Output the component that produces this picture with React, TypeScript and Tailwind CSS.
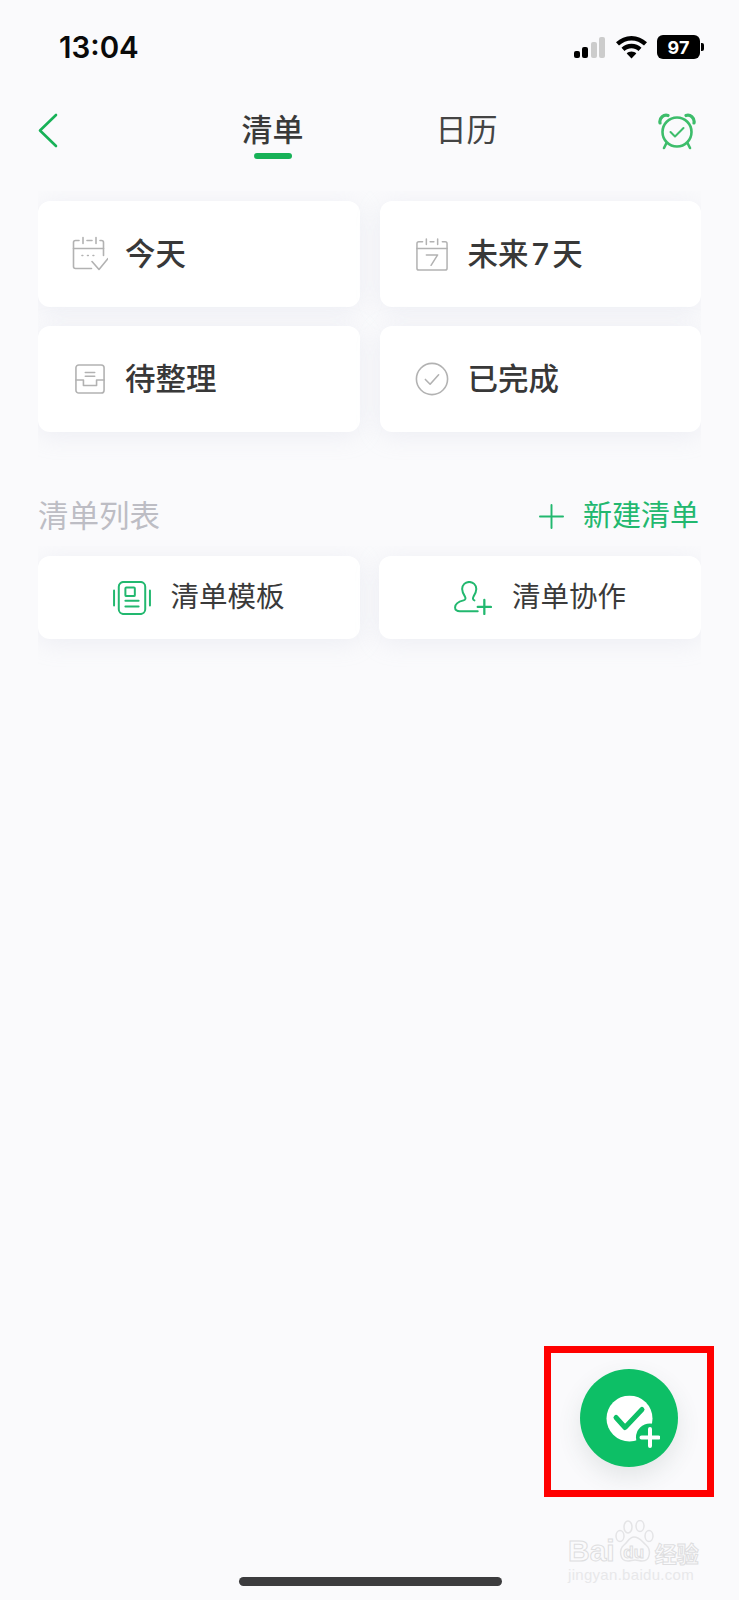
const cjk = "font-['Inter','Noto_Sans_CJK_SC',sans-serif]";

const CalendarCheck = () => (
  <svg width="36" height="36" viewBox="0 2 36 35" fill="none" stroke="#b2b2b2" strokeWidth="1.600" strokeLinecap="round" strokeLinejoin="round">
    <path d="M7 6H3.500A2 2 0 0 0 1.500 8v24a2 2 0 0 0 2 2h16" />
    <path d="M28 6h1.500a2 2 0 0 1 2 2v13" />
    <path d="M1.500 14h30" />
    <path d="M11 3v6M24 3v6M15 6h5" />
    <path d="M10 21h.8M15.500 21h.8M21 21h.8" />
    <path d="M20 27l7 8 9-11" />
  </svg>
);

const CalendarSeven = () => (
  <svg width="32" height="33" viewBox="0 1 34 35" fill="none" stroke="#b2b2b2" strokeWidth="1.600" strokeLinecap="round" strokeLinejoin="round">
    <path d="M7 5H3a2 2 0 0 0-2 2v26a2 2 0 0 0 2 2h28a2 2 0 0 0 2-2V7a2 2 0 0 0-2-2h-3" />
    <path d="M1 12h32" />
    <path d="M11 2v6M23 2v6M15 5h4" />
    <path d="M11 19h12l-7 11" />
  </svg>
);

const Inbox = () => (
  <svg width="30" height="30" viewBox="0 0 32 32" fill="none" stroke="#b2b2b2" strokeWidth="1.700" strokeLinecap="round" strokeLinejoin="round">
    <rect x="1" y="1" width="30" height="30" rx="3" />
    <path d="M1 17h8v6h14v-6h8" />
    <path d="M11 9h10M11 13h10" />
  </svg>
);

const CircleCheck = () => (
  <svg width="34" height="34" viewBox="0 0 36 36" fill="none" stroke="#b2b2b2" strokeWidth="1.700" strokeLinecap="round" strokeLinejoin="round">
    <circle cx="18" cy="18" r="16.500" />
    <path d="M11 18.500l5 5 9-10" />
  </svg>
);

const Alarm = () => (
  <svg width="38" height="38" viewBox="0 0 38 38" fill="none" stroke="#3dbd6b" strokeWidth="2.600" strokeLinecap="round" strokeLinejoin="round">
    <circle cx="19" cy="20" r="14.500" />
    <path d="M2 11c-1-5 4-9 8-7.500" strokeWidth="3.200" />
    <path d="M36 11c1-5-4-9-8-7.500" strokeWidth="3.200" />
    <path d="M8.500 31l-2.500 5M29.500 31l2.500 5" />
    <path d="M12.500 20l4.500 4.500 8.500-8.500" strokeWidth="2" />
  </svg>
);

const Template = () => (
  <svg width="38" height="34" viewBox="0 0 40 36" fill="none" stroke="#22b86f" strokeWidth="2.100" strokeLinecap="round" strokeLinejoin="round">
    <rect x="6" y="1" width="28" height="34" rx="5" />
    <rect x="13" y="7" width="10" height="9" rx="1" />
    <path d="M13 21h14M13 27h14" />
    <path d="M1 10v16M39 10v16" />
  </svg>
);

const PersonPlus = () => (
  <svg width="38" height="34" viewBox="0 0 40 36" fill="none" stroke="#22b86f" strokeWidth="2.100" strokeLinecap="round" strokeLinejoin="round">
    <path d="M25 32H6c-3 0-5-1.500-5-4 0-3 3-6 9-7.500 2-.5 2.500-2 1.500-4-2-3-3-5-3-8C8.500 4 12 1 16 1s7.500 3 7.500 7.500c0 3-1 5-3 8-1 2-.5 3.500 1 4" />
    <path d="M32 20v15M25 27.500h14" strokeWidth="2.400" />
  </svg>
);

const Paw = () => (
  <svg width="40" height="42" viewBox="0 0 40 42" fill="none" stroke="#e4e4e6" strokeWidth="1.500">
    <ellipse cx="13" cy="7" rx="4" ry="6" />
    <ellipse cx="25" cy="6" rx="4" ry="5.500" />
    <ellipse cx="5" cy="16" rx="4" ry="5.500" />
    <ellipse cx="34" cy="16" rx="4" ry="5.500" />
    <path d="M19 17c-5 0-6 5-10 8-5 4-5 16 4 16 3 0 4-1 7-1s4 1 7 1c9 0 9-12 4-16-4-3-6-8-12-8z" />
  </svg>
);

const shortcuts = [
  { label: "今天", icon: <CalendarCheck />, gap: "gap-[17px]" },
  { label: "未来 7 天", icon: <CalendarSeven />, gap: "gap-[18px]" },
  { label: "待整理", icon: <Inbox />, gap: "gap-[17px]" },
  { label: "已完成", icon: <CircleCheck />, gap: "gap-[18px]" },
];

const cardShadow = "shadow-[0_4px_24px_rgba(190,195,215,0.22)]";

export default function App() {
  return (
    <div className={`relative h-[1600px] w-full overflow-hidden bg-[#fafafc] ${cjk}`}>
      {/* status bar */}
      <div className="flex h-[94px] items-start justify-between pl-[59px] pr-[35px] pt-[29px]">
        <span className="text-[29.500px] leading-[36px] font-semibold text-[#0a0a0a] font-['Inter',sans-serif]">13:04</span>
        <div className="flex items-center gap-[10px] pt-[6px]">
          <div className="mr-[1px] flex items-end gap-[2.500px]">
            <div className="h-[7px] w-[6px] rounded-[2px] bg-black" />
            <div className="h-[11px] w-[6px] rounded-[2px] bg-black" />
            <div className="h-[16px] w-[6px] rounded-[2px] bg-[#cccccc]" />
            <div className="h-[21px] w-[6px] rounded-[2px] bg-[#cccccc]" />
          </div>
          <svg width="31" height="23" viewBox="0 0 31 23" fill="black">
            <path d="M15.500 0C9.500 0 4.300 2.300 0 6.300l3 3.200C6.500 6.300 10.800 4.400 15.500 4.400s9 1.900 12.500 5.100l3-3.200C26.700 2.300 21.500 0 15.500 0z" />
            <path d="M15.500 7.800c-3.900 0-7.300 1.500-10 4l3 3.200c2-1.800 4.300-2.800 7-2.800s5 1 7 2.800l3-3.200c-2.700-2.500-6.100-4-10-4z" />
            <path d="M15.500 15.500c-1.900 0-3.500.7-4.800 1.900l4.800 5.100 4.800-5.100c-1.300-1.200-2.900-1.900-4.800-1.900z" />
          </svg>
          <div className="flex items-center gap-[1px]">
            <div className="flex h-[24px] w-[43px] items-center justify-center rounded-[6px] bg-black text-[18px] font-bold text-white font-['Inter',sans-serif]">97</div>
            <div className="h-[8px] w-[3px] rounded-r-[2px] bg-black" />
          </div>
        </div>
      </div>

      {/* nav */}
      <div className="flex h-[69px] items-start justify-between px-[38px]">
        <div className="w-[40px] pt-[19px]">
          <svg width="20" height="35" viewBox="0 0 20 35" fill="none" stroke="#17b157" strokeWidth="2.600" strokeLinecap="round" strokeLinejoin="round">
            <path d="M18 2L2 17.500 18 33" />
          </svg>
        </div>
        <div className="flex gap-[132px] pt-[14px]">
          <div className="flex flex-col items-center">
            <span className="text-[31px] leading-[44px] font-medium text-[#3a3a3a]">清单</span>
            <div className="mt-[1px] h-[6px] w-[38px] rounded-full bg-[#17b157]" />
          </div>
          <span className="text-[31px] leading-[44px] text-[#444444]">日历</span>
        </div>
        <div className="flex w-[40px] justify-end pt-[18px]">
          <div className="mr-[5px]"><Alarm /></div>
        </div>
      </div>

      {/* shortcut cards, the shadow stops at the edges of the column */}
      <div className="mx-[38px] mt-[28px] overflow-hidden pt-[10px] pb-[44px]">
        <div className="grid grid-cols-2 gap-x-[20px] gap-y-[19px]">
          {shortcuts.map((s) => (
            <div key={s.label} className={`flex h-[106px] items-center rounded-[12px] bg-white pl-[34px] ${cardShadow} ${s.gap}`}>
              <div className="flex w-[36px] justify-center">{s.icon}</div>
              <span className="text-[30.500px] font-medium text-[#383838] [word-spacing:-5px]">{s.label}</span>
            </div>
          ))}
        </div>
      </div>

      {/* list header */}
      <div className="mt-[18px] flex h-[44px] items-center justify-between pl-[38px] pr-[40px]">
        <span className="text-[30.500px] text-[#bdbdc4]">清单列表</span>
        <div className="flex items-center gap-[19px]">
          <svg width="25" height="25" viewBox="0 0 26 26" stroke="#22b86f" strokeWidth="2" strokeLinecap="round">
            <path d="M13 1v24M1 13h24" />
          </svg>
          <span className="text-[29px] text-[#22b86f]">新建清单</span>
        </div>
      </div>

      {/* template + collab */}
      <div className="mx-[38px] mt-[8px] overflow-hidden pt-[10px] pb-[50px]">
        <div className="grid grid-cols-2 gap-x-[19px]">
          <div className={`flex h-[83px] items-center justify-center gap-[19px] rounded-[12px] bg-white ${cardShadow}`}>
            <Template />
            <span className="text-[28.500px] text-[#3a3a3a]">清单模板</span>
          </div>
          <div className={`flex h-[83px] items-center justify-center gap-[20px] rounded-[12px] bg-white ${cardShadow}`}>
            <PersonPlus />
            <span className="text-[28.500px] text-[#3a3a3a]">清单协作</span>
          </div>
        </div>
      </div>

      {/* red highlight + fab */}
      <div className="absolute left-[544px] top-[1346px] flex h-[151px] w-[170px] items-center justify-center border-[7px] border-[#ff0000] pb-[7px]">
        <div className="relative flex h-[98px] w-[98px] items-center justify-center rounded-full bg-[#0dbf66] shadow-[0_10px_24px_rgba(60,80,70,0.12)]">
          <svg width="54" height="53" viewBox="0 0 54 53" className="translate-x-[4px] translate-y-[3.500px]">
            <circle cx="23.500" cy="23" r="23" fill="white" />
            <path d="M10 22l9 10L36 14" fill="none" stroke="#0dbf66" strokeWidth="5" strokeLinecap="round" strokeLinejoin="round" />
            <circle cx="44" cy="42" r="14" fill="#0dbf66" />
            <path d="M44 33.500v17M35.500 42h17" stroke="white" strokeWidth="4" strokeLinecap="round" />
          </svg>
        </div>
      </div>

      {/* home indicator */}
      <div className="absolute bottom-[14px] left-[239px] h-[9px] w-[263px] rounded-full bg-[#3c3c3e]" />

      {/* watermark */}
      <div className="absolute left-[568px] top-[1536px] flex w-[132px] flex-col items-start font-['Liberation_Sans',sans-serif]">
        <div className="flex items-end">
          <span className="text-[30px] leading-[30px] font-bold text-transparent [-webkit-text-stroke:1px_#dedee0]">Bai</span>
          <div className="relative h-[30px] w-[38px]">
            <div className="absolute -top-[16px] left-0"><Paw /></div>
            <span className="absolute inset-x-0 top-[7px] text-center text-[17px] leading-[20px] font-bold text-transparent [-webkit-text-stroke:1px_#dedee0]">du</span>
          </div>
          <span className="ml-[2px] text-[22px] leading-[28px] font-bold text-transparent font-['Noto_Sans_CJK_SC',sans-serif] [-webkit-text-stroke:1px_#dedee0]">经验</span>
        </div>
        <span className="text-[15px] leading-[18px] tracking-[0.300px] text-[#e8e8ea]">jingyan.baidu.com</span>
      </div>
    </div>
  );
}
